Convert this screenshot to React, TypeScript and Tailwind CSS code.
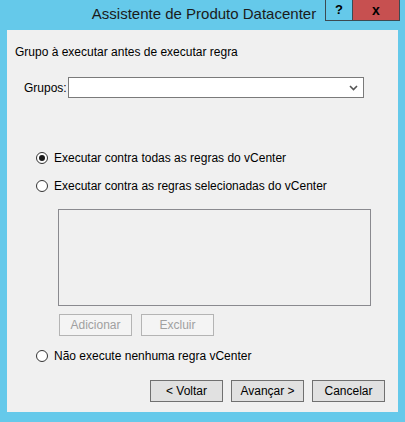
import React from 'react';

const font = { fontFamily: '"Liberation Sans", Arial, sans-serif' };

const Radio: React.FC<{ checked?: boolean; label: string; className?: string }> = ({ checked, label, className }) => (
  <div className={`flex items-center ${className ?? ''}`}>
    <div className="flex h-[12px] w-[12px] shrink-0 items-center justify-center rounded-full border border-[#333] bg-white">
      {checked && <div className="h-[6px] w-[6px] rounded-full bg-[#1a1a1a]" />}
    </div>
    <span className="ml-[6px] text-[12px] leading-[14px] text-black">{label}</span>
  </div>
);

const Btn: React.FC<{ label: string; disabled?: boolean; className?: string }> = ({ label, disabled, className }) => (
  <button
    className={`flex h-[22px] w-[73px] items-center justify-center text-[12px] leading-none ${
      disabled ? 'border border-[#b4b4b4] bg-[#f4f4f4] text-[#a0a0a0]' : 'border border-[#707070] bg-[#e1e1e1] text-black'
    } ${className ?? ''}`}
  >
    {label}
  </button>
);

export default function App() {
  return (
    <div className="flex h-[422px] w-[405px] flex-col bg-[#65c9ea]" style={font}>
      {/* title bar */}
      <div className="flex h-[30px] shrink-0 items-start">
        <div className="flex h-[28px] flex-1 items-center justify-center pl-[83px] text-[15px] text-[#1b1b1b]">
          Assistente de Produto Datacenter
        </div>
        <div className="mr-[5px] flex h-[21px] border border-[#3c4a52] border-t-0">
          <div className="flex w-[27px] items-center justify-center border-r border-[#3c4a52] text-[13px] font-bold text-black">?</div>
          <div className="flex w-[46px] items-center justify-center bg-[#c75050] text-[14px] font-bold text-black">x</div>
        </div>
      </div>

      {/* client */}
      <div className="mx-[7px] flex h-[382px] flex-col bg-[#f0f0f0]">
        <div className="ml-[8px] mt-[15px] text-[12px] leading-[14px] text-black">Grupo à executar antes de executar regra</div>

        <div className="ml-[17px] mt-[18px] flex items-center">
          <span className="mr-[1px] text-[12px] leading-[14px] text-black">Grupos:</span>
          <div className="flex h-[21px] w-[296px] items-center justify-end border border-[#7a7a7a] bg-white pr-[5px]">
            <svg width="9" height="6" viewBox="0 0 9 6">
              <path d="M1 1 L4.5 4.5 L8 1" fill="none" stroke="#555" strokeWidth="1.6" />
            </svg>
          </div>
        </div>

        <Radio checked label="Executar contra todas as regras do vCenter" className="ml-[29px] mt-[53px]" />
        <Radio label="Executar contra as regras selecionadas do vCenter" className="ml-[29px] mt-[14px]" />

        <div className="ml-[51px] mt-[16px] h-[97px] w-[313px] border border-[#8a8a8f] bg-[#f0f0f0]" />

        <div className="ml-[52px] mt-[8px] flex gap-[9px]">
          <Btn label="Adicionar" disabled />
          <Btn label="Excluir" disabled />
        </div>

        <Radio label="Não execute nenhuma regra vCenter" className="ml-[29px] mt-[13px]" />

        <div className="ml-[143px] mt-[17px] flex gap-[8px]">
          <Btn label="< Voltar" />
          <Btn label="Avançar >" />
          <Btn label="Cancelar" />
        </div>
      </div>
    </div>
  );
}
